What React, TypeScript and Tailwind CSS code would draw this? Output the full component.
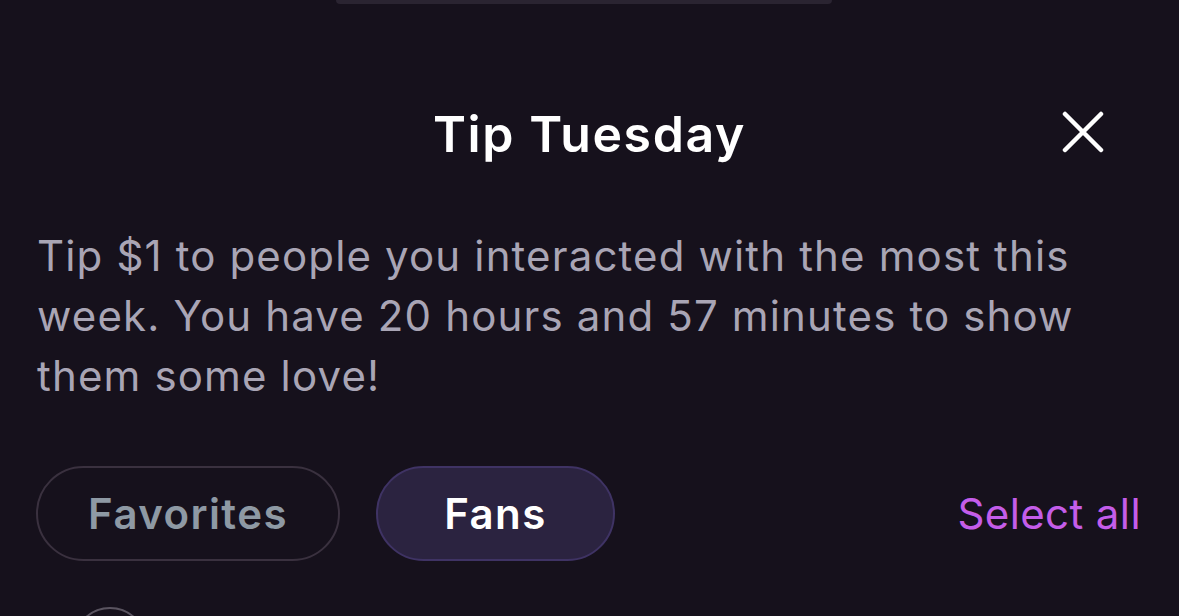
import React from 'react';

const CloseIcon: React.FC = () => (
  <svg width="42" height="42" viewBox="0 0 42 42" fill="none">
    <path d="M3 3 L39 39 M39 3 L3 39" stroke="white" strokeWidth="4.5" strokeLinecap="round" />
  </svg>
);

const Pill: React.FC<{ label: string; active?: boolean; className?: string }> = ({
  label,
  active = false,
  className = '',
}) => (
  <button
    className={`h-[95px] rounded-full border-2 text-[42px] font-semibold tracking-[1.4px] flex items-center justify-center ${
      active
        ? 'bg-[#2b2340] border-[#3f3364] text-white'
        : 'bg-transparent border-[#3a313f] text-[#8e99a4]'
    } ${className}`}
  >
    {label}
  </button>
);

export default function App() {
  return (
    <div
      className="h-[616px] w-[1179px] overflow-hidden bg-[#16111c] flex flex-col"
      style={{ fontFamily: 'Inter, "Noto Sans", sans-serif' }}
    >
      <div className="flex justify-center pr-[11px]">
        <div className="h-[4px] w-[496px] rounded-b-full bg-[#2a2431]" />
      </div>

      <div className="relative flex items-center justify-center mt-[98px] h-[64px]">
        <h1 className="text-[50px] font-semibold text-white tracking-[1.6px]">Tip Tuesday</h1>
        <button className="absolute right-[75px] top-[9px]">
          <CloseIcon />
        </button>
      </div>

      <p className="mt-[60px] px-[37px] text-[42px] leading-[60px] text-[#a9a5b5] tracking-[1.15px]">
        Tip $1 to people you interacted with the most this week. You have 20 hours and 57 minutes to
        show them some love!
      </p>

      <div className="mt-[60px] px-[36px] flex items-center">
        <Pill label="Favorites" className="w-[304px]" />
        <Pill label="Fans" active className="w-[239px] ml-[36px]" />
        <span className="ml-auto mr-[2px] text-[42px] text-[#c45de9] tracking-[0.4px]">Select all</span>
      </div>

      <div className="mt-[46px] ml-[73px] w-[74px] h-[74px] rounded-full border-2 border-[#5a5460] shrink-0" />
    </div>
  );
}
